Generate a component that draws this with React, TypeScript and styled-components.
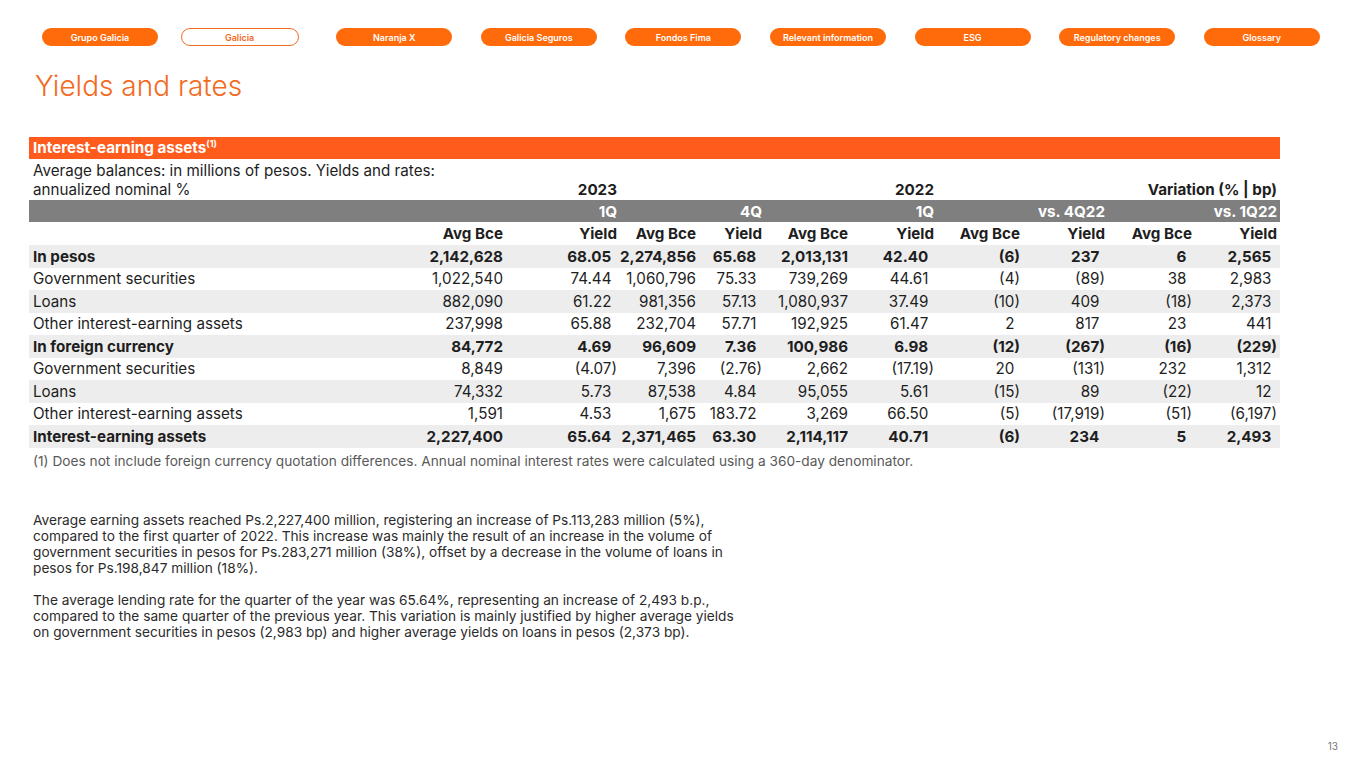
import React from "react";
import styled, { createGlobalStyle } from "styled-components";

const Global = createGlobalStyle`
  html, body { margin: 0; padding: 0; background: #ffffff; }
  body { font-family: Inter, "Noto Sans", "Liberation Sans", sans-serif; color: #222; }
`;

const Page = styled.div`
  width: 1365px;
  min-height: 768px;
  box-sizing: border-box;
  display: flex;
  flex-direction: column;
  padding-top: 28px;
`;

const Nav = styled.nav`
  display: flex;
  gap: 28.6px;
  padding-left: 42px;
`;

const Pill = styled.div<{ $active?: boolean }>`
  width: ${(p) => (p.$active ? "118px" : "116px")};
  margin: ${(p) => (p.$active ? "0 9px 0 -6px" : "0")};
  height: 18px;
  box-sizing: border-box;
  border-radius: 9px;
  display: flex;
  align-items: center;
  justify-content: center;
  font-size: 9px;
  font-weight: 600;
  background: ${(p) => (p.$active ? "#ffffff" : "#FF6A0A")};
  color: ${(p) => (p.$active ? "#F26B1F" : "#ffffff")};
  border: ${(p) => (p.$active ? "1.5px solid #F26B1F" : "none")};
`;

const Title = styled.h1`
  margin: 23px 0 0 35px;
  font-size: 28px;
  font-weight: 300;
  color: #F26B1F;
  line-height: 34px;
  letter-spacing: 0;
`;

const Table = styled.table`
  margin: 34px 0 0 29px;
  width: 1251px;
  border-collapse: collapse;
  table-layout: fixed;
  font-size: 15.2px;
  color: #1e1e1e;
`;

const TitleCell = styled.td`
  background: #FF5B1C;
  color: #fff;
  font-weight: 700;
  height: 22px;
  padding: 0 4px;
  line-height: 22px;
  sup { font-size: 9px; line-height: 0; vertical-align: 6px; }
`;

const Caption = styled.td`
  padding: 3px 4px 1px 4px;
  line-height: 18.5px;
  vertical-align: bottom;
  white-space: nowrap;
`;

const YearCell = styled.td`
  text-align: right;
  font-weight: 700;
  padding: 0 3px 1px 0;
  vertical-align: bottom;
  line-height: 18.5px;
`;

const BandRow = styled.tr`
  background: #7F7F7F;
  color: #fff;
  font-weight: 700;
  height: 22px;
`;

const BandCell = styled.td`
  text-align: right;
  padding: 0 3px 0 0;
`;

const HeadRow = styled.tr`
  font-weight: 700;
  height: 23px;
`;

const HeadCell = styled.td`
  text-align: right;
  padding: 0 3px 0 0;
`;

const DataRow = styled.tr<{ $shade: boolean; $bold: boolean }>`
  height: 22.5px;
  background: ${(p) => (p.$shade ? "#EDEDED" : "#ffffff")};
  font-weight: ${(p) => (p.$bold ? 700 : 400)};
`;

const LabelCell = styled.td`
  padding: 0 4px;
  white-space: nowrap;
`;

const NumCell = styled.td`
  text-align: right;
  padding: 0 3px 0 0;
  white-space: nowrap;
`;

const Ghost = styled.span`
  visibility: hidden;
`;

const Footnote = styled.p`
  margin: 5px 0 0 33px;
  font-size: 13.7px;
  color: #595959;
  line-height: 16px;
`;

const Body = styled.div`
  margin: 43px 0 0 33px;
  width: 705px;
  font-size: 13.7px;
  line-height: 16px;
  color: #2b2b2b;
  p { margin: 0 0 16px 0; }
`;

const Footer = styled.div`
  margin-top: auto;
  padding: 0 27px 16px 0;
  text-align: right;
  font-size: 10px;
  color: #777;
`;

const navItems = [
  "Grupo Galicia",
  "Galicia",
  "Naranja X",
  "Galicia Seguros",
  "Fondos Fima",
  "Relevant information",
  "ESG",
  "Regulatory changes",
  "Glossary",
];

const widths = [391, 86, 114, 79, 66, 86, 86, 86, 85, 87, 85];
const padCols = [false, true, false, true, false, true, true, true, true, true];

const rows: { label: string; bold: boolean; v: string[] }[] = [
  { label: "In pesos", bold: true, v: ["2,142,628", "68.05", "2,274,856", "65.68", "2,013,131", "42.40", "(6)", "237", "6", "2,565"] },
  { label: "Government securities", bold: false, v: ["1,022,540", "74.44", "1,060,796", "75.33", "739,269", "44.61", "(4)", "(89)", "38", "2,983"] },
  { label: "Loans", bold: false, v: ["882,090", "61.22", "981,356", "57.13", "1,080,937", "37.49", "(10)", "409", "(18)", "2,373"] },
  { label: "Other interest-earning assets", bold: false, v: ["237,998", "65.88", "232,704", "57.71", "192,925", "61.47", "2", "817", "23", "441"] },
  { label: "In foreign currency", bold: true, v: ["84,772", "4.69", "96,609", "7.36", "100,986", "6.98", "(12)", "(267)", "(16)", "(229)"] },
  { label: "Government securities", bold: false, v: ["8,849", "(4.07)", "7,396", "(2.76)", "2,662", "(17.19)", "20", "(131)", "232", "1,312"] },
  { label: "Loans", bold: false, v: ["74,332", "5.73", "87,538", "4.84", "95,055", "5.61", "(15)", "89", "(22)", "12"] },
  { label: "Other interest-earning assets", bold: false, v: ["1,591", "4.53", "1,675", "183.72", "3,269", "66.50", "(5)", "(17,919)", "(51)", "(6,197)"] },
  { label: "Interest-earning assets", bold: true, v: ["2,227,400", "65.64", "2,371,465", "63.30", "2,114,117", "40.71", "(6)", "234", "5", "2,493"] },
];

function Value({ text, pad }: { text: string; pad: boolean }) {
  const neg = text.startsWith("(");
  return (
    <>
      {text}
      {pad && !neg ? <Ghost>)</Ghost> : null}
    </>
  );
}

export default function App() {
  return (
    <>
      <Global />
      <Page>
        <Nav>
          {navItems.map((n) => (
            <Pill key={n} $active={n === "Galicia"}>
              {n}
            </Pill>
          ))}
        </Nav>
        <Title>Yields and rates</Title>
        <Table>
          <colgroup>
            {widths.map((w, i) => (
              <col key={i} style={{ width: w }} />
            ))}
          </colgroup>
          <tbody>
            <tr>
              <TitleCell colSpan={11}>
                Interest-earning assets<sup>(1)</sup>
              </TitleCell>
            </tr>
            <tr>
              <Caption>
                Average balances: in millions of pesos. Yields and rates:
                <br />
                annualized nominal %
              </Caption>
              <YearCell colSpan={2}>2023</YearCell>
              <YearCell colSpan={4}>2022</YearCell>
              <YearCell colSpan={4}>Variation (% | bp)</YearCell>
            </tr>
            <BandRow>
              <BandCell />
              <BandCell colSpan={2}>1Q</BandCell>
              <BandCell colSpan={2}>4Q</BandCell>
              <BandCell colSpan={2}>1Q</BandCell>
              <BandCell colSpan={2}>vs. 4Q22</BandCell>
              <BandCell colSpan={2}>vs. 1Q22</BandCell>
            </BandRow>
            <HeadRow>
              <HeadCell />
              {Array.from({ length: 10 }).map((_, i) => (
                <HeadCell key={i}>{i % 2 === 0 ? "Avg Bce" : "Yield"}</HeadCell>
              ))}
            </HeadRow>
            {rows.map((r, ri) => (
              <DataRow key={ri} $shade={ri % 2 === 0} $bold={r.bold}>
                <LabelCell>{r.label}</LabelCell>
                {r.v.map((x, ci) => (
                  <NumCell key={ci}>
                    <Value text={x} pad={padCols[ci]} />
                  </NumCell>
                ))}
              </DataRow>
            ))}
          </tbody>
        </Table>
        <Footnote>
          (1) Does not include foreign currency quotation differences. Annual nominal interest rates were calculated using a 360-day denominator.
        </Footnote>
        <Body>
          <p>
            Average earning assets reached Ps.2,227,400 million, registering an increase of Ps.113,283 million (5%),
            compared to the first quarter of 2022. This increase was mainly the result of an increase in the volume of
            government securities in pesos for Ps.283,271 million (38%), offset by a decrease in the volume of loans in
            pesos for Ps.198,847 million (18%).
          </p>
          <p>
            The average lending rate for the quarter of the year was 65.64%, representing an increase of 2,493 b.p.,
            compared to the same quarter of the previous year. This variation is mainly justified by higher average yields
            on government securities in pesos (2,983 bp) and higher average yields on loans in pesos (2,373 bp).
          </p>
        </Body>
        <Footer>13</Footer>
      </Page>
    </>
  );
}
